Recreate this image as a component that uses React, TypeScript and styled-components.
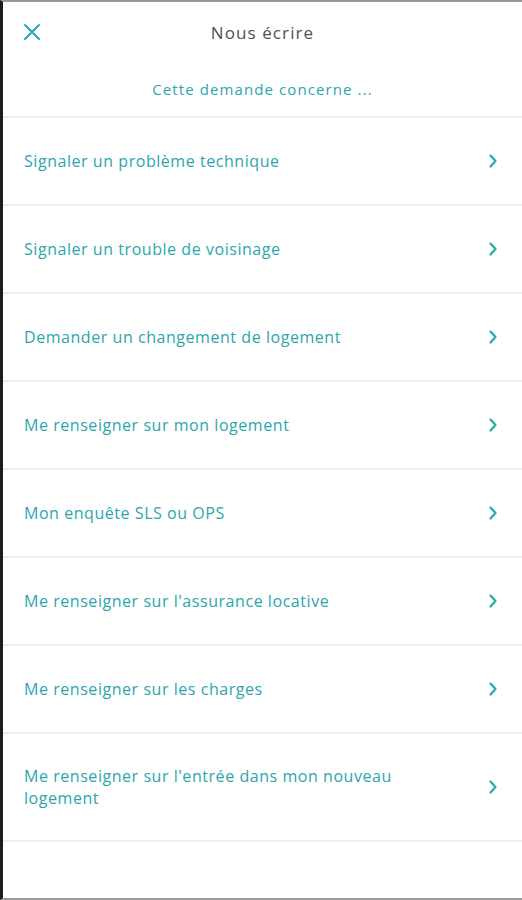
import styled, { createGlobalStyle } from "styled-components";

const GlobalStyle = createGlobalStyle`
    html, body {
        margin: 0;
        padding: 0;
        background: #ffffff;
    }
    * {
        box-sizing: border-box;
    }
`;

const TEAL = "#2ba6ae";

const Screen = styled.div`
    width: 522px;
    height: 900px;
    background: #ffffff;
    border-left: 3px solid #1c1c1c;
    border-top: 2px solid #9a9a9a;
    border-bottom: 2px solid #9a9a9a;
    font-family: "Open Sans", "Liberation Sans", sans-serif;
    display: flex;
    flex-direction: column;
    overflow: hidden;
`;

const Header = styled.header`
    height: 60px;
    display: grid;
    grid-template-columns: 60px 1fr 60px;
    align-items: center;
`;

const CloseBtn = styled.button`
    border: none;
    background: none;
    padding: 0 0 0 20px;
    display: flex;
    align-items: center;
    cursor: pointer;
`;

const Title = styled.h1`
    margin: 0;
    text-align: center;
    font-size: 17px;
    font-weight: 400;
    color: #505050;
    letter-spacing: 1.1px;
`;

const Subtitle = styled.div`
    height: 56px;
    display: flex;
    align-items: center;
    justify-content: center;
    font-size: 15px;
    color: ${TEAL};
    letter-spacing: 1.1px;
    border-bottom: 2px solid #ededed;
`;

const List = styled.ul`
    list-style: none;
    margin: 0;
    padding: 0;
`;

const Row = styled.li<{ $tall?: boolean }>`
    height: ${(p) => (p.$tall ? "108px" : "88px")};
    display: flex;
    align-items: center;
    justify-content: space-between;
    padding: 0 24px 0 21px;
    border-bottom: 2px solid #ededed;
    cursor: pointer;
`;

const Label = styled.span`
    font-size: 16px;
    line-height: 22px;
    color: ${TEAL};
    letter-spacing: 0.55px;
    max-width: 390px;
`;

const Chevron = () => (
    <svg width="10" height="16" viewBox="0 0 10 16" fill="none">
        <path d="M2.5 2.5 L7.5 8 L2.5 13.5" stroke={TEAL} strokeWidth="2.2" strokeLinecap="round" strokeLinejoin="round" />
    </svg>
);

const CloseIcon = () => (
    <svg width="18" height="18" viewBox="0 0 18 18" fill="none">
        <path d="M2 2 L16 16 M16 2 L2 16" stroke={TEAL} strokeWidth="2" strokeLinecap="round" />
    </svg>
);

const items = [
    "Signaler un problème technique",
    "Signaler un trouble de voisinage",
    "Demander un changement de logement",
    "Me renseigner sur mon logement",
    "Mon enquête SLS ou OPS",
    "Me renseigner sur l'assurance locative",
    "Me renseigner sur les charges",
    "Me renseigner sur l'entrée dans mon nouveau logement",
];

export default function App() {
    return (
        <>
            <GlobalStyle />
            <Screen>
                <Header>
                    <CloseBtn aria-label="Fermer"><CloseIcon /></CloseBtn>
                    <Title>Nous écrire</Title>
                    <div />
                </Header>
                <Subtitle>Cette demande concerne ...</Subtitle>
                <List>
                    {items.map((label, i) => (
                        <Row key={label} $tall={i === items.length - 1}>
                            <Label>{label}</Label>
                            <Chevron />
                        </Row>
                    ))}
                </List>
            </Screen>
        </>
    );
}
